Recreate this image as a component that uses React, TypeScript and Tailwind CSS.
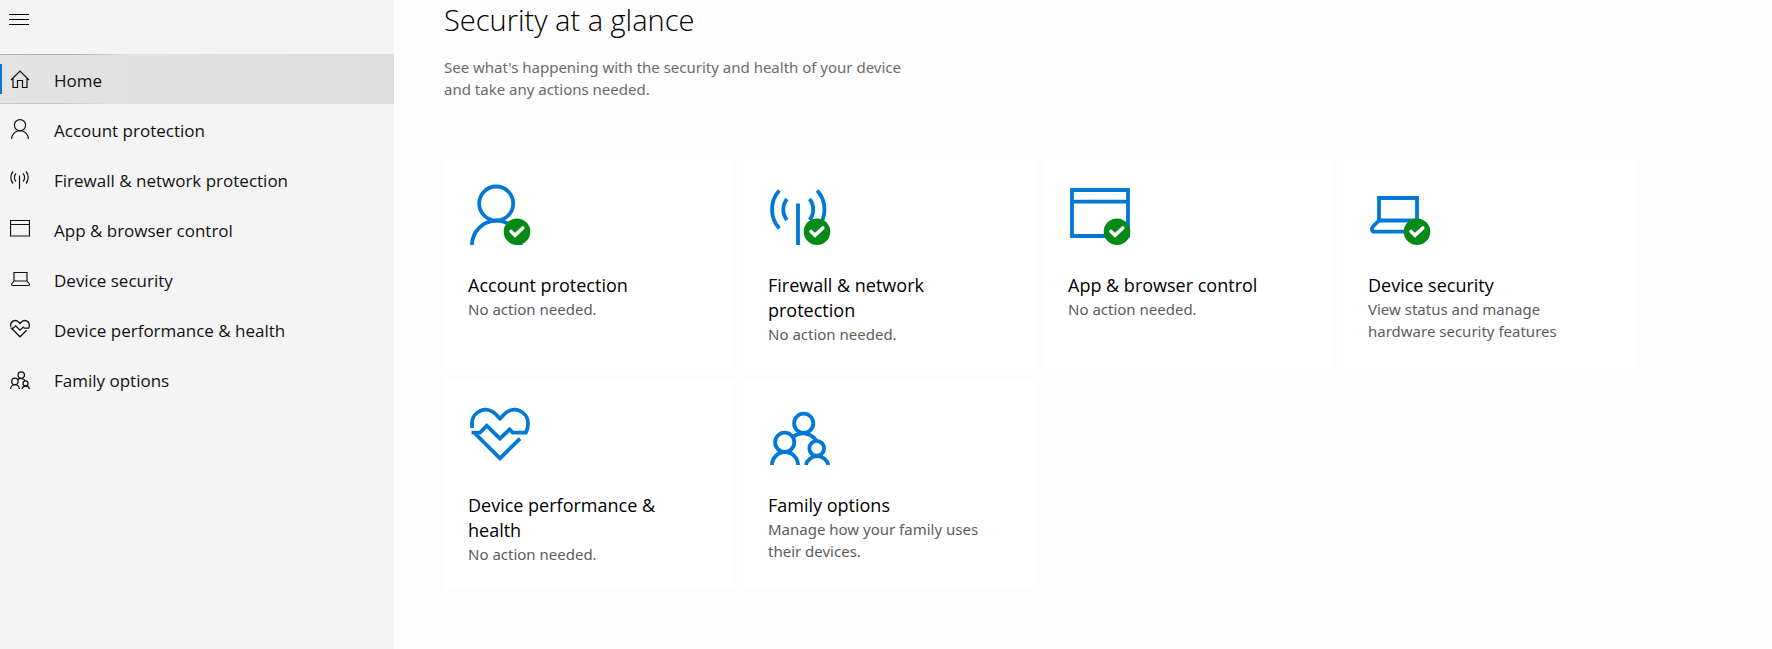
import type { ReactNode } from 'react'
import { useState } from 'react'

interface Section {
  id: string
  title: string
  description: string
  icon: ReactNode
  navIcon: ReactNode
  healthy?: boolean
}

const heart = (
  <>
    <path d="M4 25v-4.5A13.6 13.6 0 0 1 27.5 11L32 15.5L36.500 11A13.600 13.600 0 0 1 60 20.500Q60 25.500 57.800 29.700H44.700L41.500 26.500L32 35.700L18.700 22.700L12 29.700H3.500" />
    <path d="M7 30.500L32 55.300L52 35.700" />
  </>
)

const family = (
  <>
    <circle cx="35.700" cy="20.300" r="9.600" />
    <circle cx="16.700" cy="39.300" r="9.600" />
    <circle cx="48.700" cy="45.300" r="7.400" />
    <path d="M4 62a13 13 0 0 1 26 0M38 62a11.300 10.500 0 0 1 22.300 0M25 34a16 16 0 0 1 23 3" />
  </>
)

const sections: Section[] = [
  {
    id: 'account',
    title: 'Account protection',
    description: 'No action needed.',
    healthy: true,
    icon: (
      <>
        <circle cx="28.200" cy="20.500" r="17" />
        <path d="M4 62a24.300 24.300 0 0 1 48.600 0" />
      </>
    ),
    navIcon: (
      <>
        <circle cx="10" cy="6.200" r="5.600" />
        <path d="M1.600 20a8.400 8.400 0 0 1 16.800 0" />
      </>
    ),
  },
  {
    id: 'firewall',
    title: 'Firewall & network protection',
    description: 'No action needed.',
    healthy: true,
    icon: (
      <>
        <path d="M30 20.500V62M19 16a16.700 16.700 0 0 0 0 21M41.500 16a16.700 16.700 0 0 1 0 21" />
        <path d="M11.300 7.500a28.400 28.400 0 0 0 0 38M49.200 7.500a28.400 28.400 0 0 1 0 38" />
      </>
    ),
    navIcon: (
      <>
        <path d="M9.500 6.500V20M6 4.500a5.800 5.800 0 0 0 0 8M13 4.500a5.800 5.800 0 0 1 0 8" />
        <path d="M3 2.500a9.400 9.400 0 0 0 0 12M16 2.500a9.400 9.400 0 0 1 0 12" />
      </>
    ),
  },
  {
    id: 'browser',
    title: 'App & browser control',
    description: 'No action needed.',
    healthy: true,
    icon: <path d="M4 7h56v46H4zM4 18.700h56" />,
    navIcon: <path d="M.5 1.500h19v15.500H.5zM.5 5.500h19" />,
  },
  {
    id: 'device',
    title: 'Device security',
    description: 'View status and manage hardware security features',
    healthy: true,
    icon: (
      <>
        <path d="M11 37.500V15h38v22.500z" />
        <path d="M11 37.500L5 43.500C2.800 46 4 48.700 6.500 48.700H53.500C56 48.700 57.200 46 55 43.500L49 37.500" />
      </>
    ),
    navIcon: (
      <>
        <path d="M4 12V3.500h13V12z" />
        <path d="M4 12L2 14.500C1.200 15.500 1.700 16.500 2.500 16.500H18.500C19.300 16.500 19.800 15.500 19 14.500L17 12" />
      </>
    ),
  },
  {
    id: 'performance',
    title: 'Device performance & health',
    description: 'No action needed.',
    icon: heart,
    navIcon: <g transform="translate(-.67 -.67) scale(.3333)" strokeWidth="3.800">{heart}</g>,
  },
  {
    id: 'family',
    title: 'Family options',
    description: 'Manage how your family uses their devices.',
    icon: family,
    navIcon: <g transform="translate(-.67 -.67) scale(.3333)" strokeWidth="3.800">{family}</g>,
  },
]

const homeIcon = <path d="M1 11L10 2L19 11M3 9.500V18.500H7.500V11.500H12.500V18.500H17V9.500" />

function NavItem({
  id,
  label,
  icon,
  active,
  onSelect,
}: {
  id: string
  label: string
  icon: ReactNode
  active: boolean
  onSelect: (id: string) => void
}) {
  return (
    <a
      href={`#${id}`}
      onClick={() => onSelect(id)}
      aria-current={active ? 'page' : undefined}
      className={`relative flex h-[50px] items-center gap-6 pl-2.5 ${
        active ? 'bg-linear-to-r from-[#e3e3e3] to-[#dddddd]' : 'hover:bg-[#e9e9e9]'
      }`}
    >
      {active && (
        <>
          <span className="absolute top-0 left-0 h-px w-32 bg-linear-to-r from-[#b4b4b4] via-[#a8a8a8] to-transparent" />
          <span className="absolute bottom-0 left-0 h-px w-28 bg-linear-to-r from-[#c8c8c8] via-[#c4c4c4] to-transparent" />
          <span className="absolute top-2.5 left-0 h-[30px] w-0.5 bg-[#0078d7]" />
        </>
      )}
      <svg viewBox="0 0 20 20" fill="none" stroke="currentColor" strokeWidth="1.200" className="h-5 w-5 shrink-0">
        {icon}
      </svg>
      <span className="pt-1 text-[17px] leading-6">{label}</span>
    </a>
  )
}

function StatusCard({ section }: { section: Section }) {
  return (
    <a href={`#${section.id}`} className="flex min-h-[210px] flex-col bg-white px-6 pt-6 pb-4 hover:bg-[#f7f7f7]">
      <svg viewBox="0 0 64 64" fill="none" stroke="#0078d7" strokeWidth="3.800" className="h-16 w-16">
        {section.icon}
        {section.healthy && (
          <g stroke="none">
            <circle cx="49" cy="48.700" r="13.300" fill="#038a17" />
            <path
              d="M43 48.500L47 52.200L54.800 45"
              stroke="#fff"
              strokeWidth="3.600"
              strokeLinecap="round"
            />
          </g>
        )}
      </svg>
      <h2 className="mt-[26px] w-52 text-[18px] leading-[25px] text-black">{section.title}</h2>
      <p className="w-56 font-['Noto_Sans','Open_Sans',sans-serif] text-[15px] leading-[22px] text-[#5c5c5c]">
        {section.description}
      </p>
    </a>
  )
}

export default function App() {
  const [active, setActive] = useState('home')

  return (
    <div className="flex min-h-screen bg-[#fdfdfd] font-['Open_Sans','Noto_Sans',sans-serif] text-[#111111]">
      {/* Sidebar */}
      <nav className="w-[394px] shrink-0 bg-[#f4f4f4]">
        <button aria-label="Toggle navigation" className="mb-[15px] flex h-[39px] items-center pl-[9px]">
          <svg viewBox="0 0 20 11" stroke="#000" strokeWidth="1" className="h-[11px] w-5">
            <path d="M0 .5h20M0 5.500h20M0 10.500h20" />
          </svg>
        </button>
        <NavItem id="home" label="Home" icon={homeIcon} active={active === 'home'} onSelect={setActive} />
        {sections.map(s => (
          <NavItem
            key={s.id}
            id={s.id}
            label={s.title}
            icon={s.navIcon}
            active={active === s.id}
            onSelect={setActive}
          />
        ))}
      </nav>

      {/* Content */}
      <main className="min-w-0 flex-1 pr-6 pb-6 pl-[50px]">
        <h1 className="text-[29px] leading-10 font-light text-black">Security at a glance</h1>
        <p className="mt-4 max-w-[480px] font-['Noto_Sans','Open_Sans',sans-serif] text-[15px] leading-[22px] text-[#6b6b6b]">
          See what's happening with the security and health of your device and take any actions needed.
        </p>
        <div className="mt-[59px] grid grid-cols-[repeat(auto-fill,290px)] gap-2.5">
          {sections.map(s => (
            <StatusCard key={s.id} section={s} />
          ))}
        </div>
      </main>
    </div>
  )
}
